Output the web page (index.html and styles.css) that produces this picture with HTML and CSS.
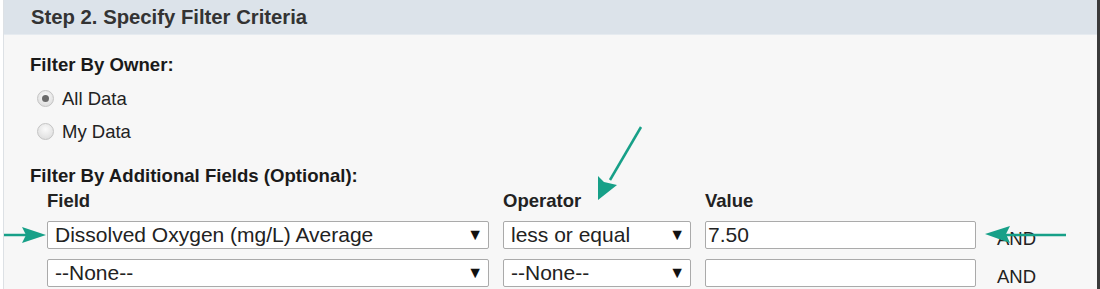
FILE: index.html
```html
<!DOCTYPE html>
<html>
  <head>
    <meta charset="UTF-8" />
    <title>Step 2. Specify Filter Criteria</title>
    <link rel="stylesheet" href="styles.css">
  </head>
  <body>
    <div class="panel">
      <div class="head">Step 2. Specify Filter Criteria</div>
      <div class="body">
        <div class="label">Filter By Owner:</div>
        <label class="radio"><span class="dot on"></span>All Data</label>
        <label class="radio"><span class="dot"></span>My Data</label>

        <div class="label extra">Filter By Additional Fields (Optional):</div>
        <div class="grid">
          <div class="col">Field</div>
          <div class="col">Operator</div>
          <div class="col">Value</div>
          <div></div>

          <div class="select field"><span>Dissolved Oxygen (mg/L) Average</span><span class="caret">&#9660;</span></div>
          <div class="select"><span>less or equal</span><span class="caret">&#9660;</span></div>
          <div class="input">7.50</div>
          <div class="and">AND</div>

          <div class="select field"><span>--None--</span><span class="caret">&#9660;</span></div>
          <div class="select"><span>--None--</span><span class="caret">&#9660;</span></div>
          <div class="input"></div>
          <div class="and">AND</div>
        </div>
      </div>

      <!-- callout arrows drawn over the form -->
      <svg class="arrows" width="1100" height="289" viewBox="0 0 1100 289">
        <g stroke="#17a088" stroke-width="2.5" fill="#17a088">
          <line x1="0" y1="235" x2="30" y2="235" />
          <polygon points="46,235 22,227 26,235 22,243" stroke="none" />
          <line x1="641" y1="127" x2="610" y2="180" />
          <polygon points="598,200 598,176 604,182 617,185" stroke="none" />
          <line x1="1066" y1="235" x2="1000" y2="235" />
          <polygon points="985,234 1010,226 1006,234 1010,243" stroke="none" />
        </g>
      </svg>
    </div>
  </body>
</html>
```

FILE: styles.css
```css
* {
  box-sizing: border-box;
  margin: 0;
  padding: 0;
}

body {
  background: #fff;
  font-family: "Liberation Sans", Arial, sans-serif;
  color: #222;
}

.panel {
  position: relative;
  height: 289px;
  overflow: hidden;
  margin-left: 3px;
  width: 1097px;
  border-left: 1px solid #dde1e5;
  border-right: 3px solid #3a3a3a;
  background: #f7f7f7;
}

.head {
  height: 35px;
  background: #dce3ea;
  border-bottom: 1px solid #e6ebf0;
  padding: 6px 0 0 27px;
  line-height: 22px;
  font-size: 20.3px;
  font-weight: bold;
  color: #333;
}

.body {
  padding: 19px 0 0 26px;
}

.label {
  font-size: 18.6px;
  line-height: 22px;
  font-weight: bold;
  color: #1a1a1a;
  margin-bottom: 6px;
}

.label.extra {
  margin-top: 17px;
  margin-bottom: 4px;
}

.radio {
  display: flex;
  align-items: center;
  height: 33px;
  padding-left: 7px;
  font-size: 18.5px;
  color: #222;
}

.dot {
  width: 17px;
  height: 17px;
  border-radius: 50%;
  border: 1px solid #c4c4c4;
  background: radial-gradient(circle at 50% 35%, #fafafa, #d8d8d8);
  margin-right: 8px;
  position: relative;
}

.dot.on::after {
  content: "";
  position: absolute;
  left: 4px;
  top: 4px;
  width: 7px;
  height: 7px;
  border-radius: 50%;
  background: #6a6a6a;
}

.grid {
  display: grid;
  grid-template-columns: 442px 188px 271px 60px;
  column-gap: 14px;
  row-gap: 10px;
  margin-left: 17px;
}

.col {
  font-size: 18.5px;
  line-height: 20px;
  font-weight: bold;
  color: #222;
}

.select,
.input {
  height: 28px;
  background: #fff;
  border: 1px solid #aaa;
  border-radius: 2px;
  font-size: 21px;
  color: #222;
  display: flex;
  align-items: center;
  padding: 0 5px 0 7px;
}

.select {
  justify-content: space-between;
}

.input {
  padding: 0 2px;
}

.caret {
  font-size: 16px;
  color: #111;
}

.and {
  font-size: 18.5px;
  line-height: 20px;
  color: #222;
  padding: 8px 0 0 7px;
}

.arrows {
  position: absolute;
  left: -4px;
  top: 0;
}
```
